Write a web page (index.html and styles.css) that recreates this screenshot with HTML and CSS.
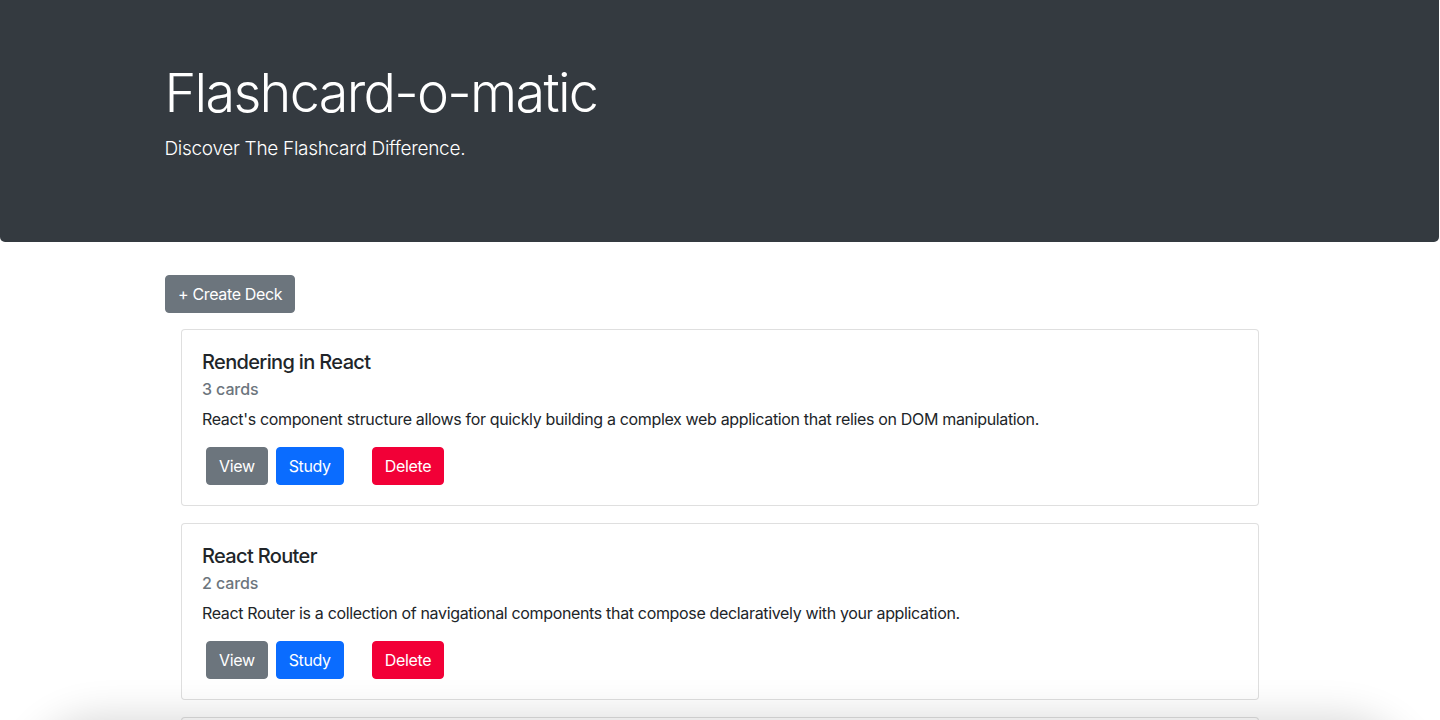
FILE: index.html
```html
<!DOCTYPE html>
<html lang="en">
<head>
<meta charset="utf-8">
<title>Flashcard-o-matic</title>
<link rel="stylesheet" href="styles.css">
</head>
<body>
<header class="jumbotron">
  <div class="container">
    <h1 class="display">Flashcard-o-matic</h1>
    <p class="lead">Discover The Flashcard Difference.</p>
  </div>
</header>
<main class="container">
  <button class="btn btn-secondary" type="button">+ Create Deck</button>
  <div class="deck-list">
    <article class="card">
      <div class="card-body">
        <h5 class="card-title">Rendering in React</h5>
        <h6 class="card-subtitle">3 cards</h6>
        <p class="card-text">React's component structure allows for quickly building a complex web application that relies on DOM manipulation.</p>
        <div class="actions">
          <button class="btn btn-secondary" type="button">View</button>
          <button class="btn btn-primary" type="button">Study</button>
          <button class="btn btn-danger btn-delete" type="button">Delete</button>
        </div>
      </div>
    </article>
    <article class="card">
      <div class="card-body">
        <h5 class="card-title">React Router</h5>
        <h6 class="card-subtitle">2 cards</h6>
        <p class="card-text">React Router is a collection of navigational components that compose declaratively with your application.</p>
        <div class="actions">
          <button class="btn btn-secondary" type="button">View</button>
          <button class="btn btn-primary" type="button">Study</button>
          <button class="btn btn-danger btn-delete" type="button">Delete</button>
        </div>
      </div>
    </article>
    <article class="card">
      <div class="card-body">
        <h5 class="card-title">JSX Basics</h5>
        <h6 class="card-subtitle">4 cards</h6>
        <p class="card-text">JSX lets you write markup that looks like HTML inside your JavaScript.</p>
        <div class="actions">
          <button class="btn btn-secondary" type="button">View</button>
          <button class="btn btn-primary" type="button">Study</button>
          <button class="btn btn-danger btn-delete" type="button">Delete</button>
        </div>
      </div>
    </article>
  </div>
</main>
<div class="screen-shade" aria-hidden="true"></div>
</body>
</html>
```
FILE: styles.css
```css
* { box-sizing: border-box; }

html, body {
  margin: 0;
  padding: 0;
  background: #fff;
}

body {
  font-family: Inter, "Noto Sans", "Liberation Sans", sans-serif;
  font-size: 16px;
  line-height: 1.5;
  color: #212529;
  overflow: hidden;
}

.container {
  width: 1140px;
  margin: 0 auto;
  padding: 0 15px;
}

.jumbotron {
  background: #343a40;
  color: #fff;
  width: calc(100% - 1px);
  padding: 59px 0 62px;
  margin-bottom: 33px;
  border-radius: 0 0 5px 5px;
}

.display {
  margin: 0 0 8px;
  font-size: 54px;
  font-weight: 300;
  line-height: 67px;
  letter-spacing: -1.7px;
}

.lead {
  margin: 0 0 16px;
  font-size: 19px;
  font-weight: 300;
  line-height: 30px;
  letter-spacing: -0.3px;
}

.btn {
  display: inline-block;
  font-family: inherit;
  font-size: 16px;
  line-height: 24px;
  font-weight: 400;
  padding: 6px 12px;
  border: 1px solid transparent;
  border-radius: 4px;
  color: #fff;
  cursor: pointer;
  letter-spacing: -0.35px;
}

.btn-secondary { background: #6c757d; border-color: #6c757d; }
.btn-primary { background: #0a6cff; border-color: #0a6cff; }
.btn-danger { background: #f20037; border-color: #f20037; }

.deck-list {
  display: flex;
  flex-direction: column;
  gap: 17px;
  margin: 16px 16px 0;
}

.card {
  border: 1px solid rgba(0, 0, 0, 0.125);
  border-radius: 4px;
  background: #fff;
}

.card-body {
  padding: 20px;
}

.card-title {
  margin: 0 0 12px;
  font-size: 20px;
  font-weight: 500;
  line-height: 24px;
  letter-spacing: -0.65px;
}

.card-subtitle {
  margin: -6px 0 8px;
  font-size: 16px;
  font-weight: 500;
  line-height: 19px;
  color: #6c757d;
  letter-spacing: -0.1px;
}

.card-text {
  margin: 0 0 16px;
  letter-spacing: -0.34px;
}

.actions {
  display: flex;
}

.actions .btn {
  margin: 0 4px;
}

.actions .btn-delete {
  margin-left: 24px;
}

.screen-shade {
  position: fixed;
  left: 40px;
  right: 40px;
  top: calc(100% + 12px);
  height: 120px;
  border-radius: 80px;
  box-shadow: 0 0 40px 14px rgba(0, 0, 0, 0.16);
  pointer-events: none;
}
```
